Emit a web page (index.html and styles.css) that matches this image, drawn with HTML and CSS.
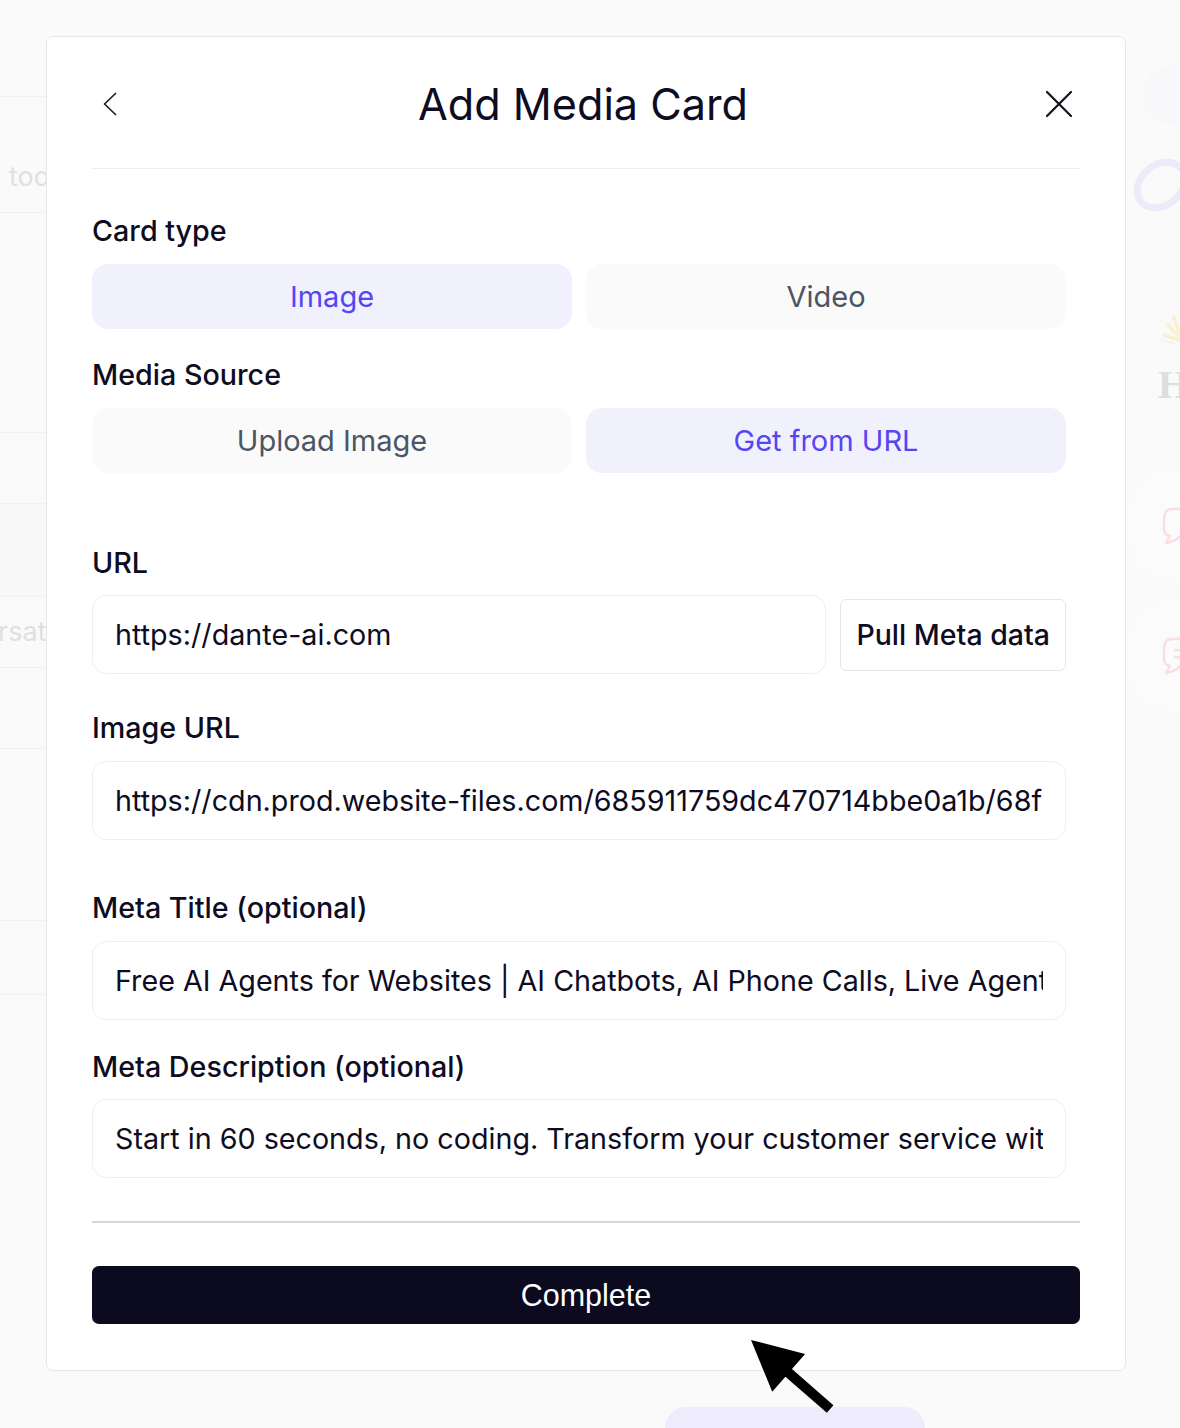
FILE: index.html
```html
<!DOCTYPE html>
<html lang="en">
<head>
<meta charset="utf-8">
<title>Add Media Card</title>
<link rel="stylesheet" href="styles.css">
</head>
<body>
<div class="app">
  <aside class="bg-left">
    <div class="bg-row r1"></div>
    <div class="bg-row r2"><span class="bg-text t-today">today</span></div>
    <div class="bg-row r3"></div>
    <div class="bg-row r4"></div>
    <div class="bg-row r5 shaded"></div>
    <div class="bg-row r6"><span class="bg-text t-conv">rsations</span></div>
    <div class="bg-row r7"></div>
    <div class="bg-row r8"></div>
    <div class="bg-row r9"></div>
  </aside>
  <main class="bg-middle">
    <div class="bg-pill"></div>
  </main>
  <aside class="bg-right">
    <div class="bg-card top"></div>
    <svg class="bg-ring" width="60" height="64" viewBox="0 0 60 64"><ellipse cx="32" cy="32" rx="26" ry="20" transform="rotate(-40 32 32)" fill="none" stroke="#ecebfa" stroke-width="7"/></svg>
    <svg class="bg-sun" width="24" height="42" viewBox="0 0 24 42"><g stroke="#fbf1d2" stroke-width="4" stroke-linecap="round"><line x1="22" y1="38" x2="8" y2="22"/><line x1="22" y1="38" x2="14" y2="14"/><line x1="22" y1="38" x2="22" y2="8"/><line x1="22" y1="38" x2="4" y2="32"/></g><path d="M2 36 Q8 40 14 40" stroke="#eeeeee" stroke-width="1.5" fill="none"/></svg>
    <div class="bg-letter">H</div>
    <div class="bg-card feat feat-one">
      <svg width="30" height="40" viewBox="0 0 30 40"><path d="M30 4 H12 Q4 4 4 14 V24 Q4 30 10 31 L6 38 Q16 36 20 31 H30" fill="none" stroke="#fbdede" stroke-width="2.5" stroke-linejoin="round"/></svg>
    </div>
    <div class="bg-card feat feat-two">
      <svg width="30" height="40" viewBox="0 0 30 40"><path d="M30 4 H12 Q4 4 4 14 V24 Q4 30 10 31 L6 38 Q16 36 20 31 H30" fill="none" stroke="#fbdede" stroke-width="2.5" stroke-linejoin="round"/><line x1="14" y1="15" x2="30" y2="15" stroke="#fbdede" stroke-width="2.5"/><line x1="14" y1="22" x2="30" y2="22" stroke="#fbdede" stroke-width="2.5"/></svg>
    </div>
  </aside>
</div>

<section class="modal">
  <header class="modal-header">
    <button class="icon-btn back" aria-label="Back">
      <svg width="14" height="24" viewBox="0 0 14 24"><polyline points="12.5,1.5 1.5,12 12.5,22.5" fill="none" stroke="#1b1b2a" stroke-width="1.7" stroke-linecap="round" stroke-linejoin="round"/></svg>
    </button>
    <h1 class="modal-title">Add Media Card</h1>
    <button class="icon-btn close" aria-label="Close">
      <svg width="28" height="28" viewBox="0 0 28 28"><g stroke="#12121f" stroke-width="2.2" stroke-linecap="round"><line x1="2" y1="2" x2="26" y2="26"/><line x1="26" y1="2" x2="2" y2="26"/></g></svg>
    </button>
  </header>

  <div class="form">
    <div class="label first">Card type</div>
    <div class="toggle-group">
      <button class="toggle active">Image</button>
      <button class="toggle">Video</button>
    </div>

    <div class="label second">Media Source</div>
    <div class="toggle-group">
      <button class="toggle">Upload Image</button>
      <button class="toggle active">Get from URL</button>
    </div>

    <div class="label field url-label">URL</div>
    <div class="url-row">
      <input class="text-input" type="text" value="https://dante-ai.com">
      <button class="pull-btn">Pull Meta data</button>
    </div>

    <div class="label field img-label">Image URL</div>
    <input class="text-input" type="text" value="https://cdn.prod.website-files.com/685911759dc470714bbe0a1b/68f9a1c2b3e4d5f6a7b8c9d0_og-image.png">

    <div class="label field title-label">Meta Title (optional)</div>
    <input class="text-input" type="text" value="Free AI Agents for Websites | AI Chatbots, AI Phone Calls, Live Agents">

    <div class="label field desc-label">Meta Description (optional)</div>
    <input class="text-input" type="text" value="Start in 60 seconds, no coding. Transform your customer service with AI agents.">
  </div>

  <hr class="footer-divider">
  <button class="complete-btn">Complete</button>
</section>

<svg class="cursor" width="95" height="85" viewBox="0 0 95 85"><polygon points="0,0 50,-25 50,-5 105,-5 105,5 50,5 50,25" transform="translate(6 5) rotate(41.1)" fill="#000"/></svg>
</body>
</html>
```

FILE: styles.css
```css
* { box-sizing: border-box; }

html, body {
  margin: 0;
  padding: 0;
}

body {
  width: 1180px;
  height: 1428px;
  overflow: hidden;
  position: relative;
  background: #fafafa;
  font-family: Inter, "Noto Sans", sans-serif;
  color: #0d0c22;
}

/* ---------- background app (dimmed) ---------- */
.app {
  display: flex;
  height: 1428px;
}

.bg-left {
  width: 46px;
  flex: none;
  overflow: hidden;
  display: flex;
  flex-direction: column;
}

.bg-row {
  border-bottom: 1px solid #f1f1f1;
  display: flex;
  align-items: center;
  white-space: nowrap;
}
.r1 { height: 97px; }
.r2 { height: 116px; align-items: flex-start; padding-top: 65px; }
.r3 { height: 220px; }
.r4 { height: 71px; }
.r5 { height: 93px; }
.r6 { height: 71px; }
.r7 { height: 81px; }
.r8 { height: 172px; }
.r9 { height: 74px; }
.shaded { background: #f8f8f8; }

.bg-text {
  font-size: 27px;
  color: #e0e0e0;
  line-height: 30px;
}
.t-today { padding-left: 9px; }
.t-conv { margin-left: -2px; }

.bg-middle {
  flex: 1;
  display: flex;
  flex-direction: column;
  justify-content: flex-end;
}

.bg-pill {
  margin-left: 619px;
  width: 260px;
  height: 21px;
  background: #eeecfc;
  border-radius: 30px 30px 0 0;
}

.bg-right {
  width: 54px;
  flex: none;
  overflow: hidden;
  display: flex;
  flex-direction: column;
  background: #fbfafb;
}

.bg-card {
  border-radius: 40px;
  background: #fdfcfc;
  flex: none;
}
.bg-card.top {
  margin-top: 65px;
  margin-left: 16px;
  width: 120px;
  height: 60px;
  background: #f8f8fa;
}
.bg-ring {
  margin-top: 28px;
  margin-left: 3px;
  flex: none;
}
.bg-sun {
  margin-top: 86px;
  margin-left: 34px;
  flex: none;
}
.bg-letter {
  margin-top: 20px;
  margin-left: 32px;
  font-family: "Liberation Serif", serif;
  font-weight: 700;
  font-size: 40px;
  line-height: 40px;
  color: #dedede;
}
.bg-card.feat {
  margin-left: 4px;
  width: 140px;
  height: 110px;
  display: flex;
  align-items: center;
  padding-left: 30px;
  background: #fcfbfb;
}
.bg-card.feat-one { margin-top: 65px; }
.bg-card.feat-two { margin-top: 20px; }

/* ---------- modal ---------- */
.modal {
  position: absolute;
  left: 46px;
  top: 36px;
  width: 1080px;
  background: #ffffff;
  border: 1px solid #e7e7e7;
  border-radius: 7px;
  padding: 40px 45px 46px;
}

.modal-header {
  display: flex;
  align-items: center;
  height: 92px;
  padding-bottom: 38px;
  border-bottom: 1px solid #eeeeee;
}

.icon-btn {
  flex: none;
  height: 54px;
  border: 0;
  padding: 0;
  background: transparent;
  display: flex;
  align-items: center;
  justify-content: center;
}
.icon-btn.back { width: 36px; }
.icon-btn.close { width: 42px; }

.modal-title {
  flex: 1;
  margin: 0;
  text-align: center;
  font-size: 43.2px;
  line-height: 54px;
  font-weight: 400;
  color: #0d0c22;
}

.form {
  padding-right: 14px;
  display: flex;
  flex-direction: column;
}

.label {
  font-size: 28.7px;
  line-height: 34px;
  font-weight: 500;
  color: #0d0c22;
  margin-bottom: 16px;
}
.label.first { margin-top: 45px; }
.label.second { margin-top: 29px; }
.label.url-label { margin-top: 73px; margin-bottom: 15px; }
.label.img-label { margin-top: 37px; }
.label.title-label { margin-top: 51px; }
.label.desc-label { margin-top: 30px; margin-bottom: 15px; }

.toggle-group {
  display: grid;
  grid-template-columns: 1fr 1fr;
  gap: 14px;
}

.toggle {
  height: 65px;
  border: 0;
  border-radius: 16px;
  background: #fafafa;
  color: #4b5563;
  font-family: inherit;
  font-size: 29px;
  font-weight: 400;
}
.toggle.active {
  background: #f1f0fd;
  color: #5546f2;
}

.url-row {
  display: flex;
  align-items: center;
  gap: 14px;
}
.url-row .text-input { flex: 1; min-width: 0; }

.text-input {
  height: 79px;
  width: 100%;
  border: 1px solid #efefef;
  border-radius: 14px;
  padding: 0 22px;
  font-family: inherit;
  font-size: 28.7px;
  color: #0d0c22;
  background: #fff;
  outline: none;
}

.pull-btn {
  flex: none;
  height: 72px;
  padding: 0 15px;
  border: 1px solid #e6e6e6;
  border-radius: 6px;
  background: #fff;
  font-family: inherit;
  font-size: 28.5px;
  font-weight: 500;
  color: #0d0c22;
}

.footer-divider {
  margin: 43px 0 0;
  border: 0;
  height: 2px;
  background: #d3d7dc;
}

.complete-btn {
  display: block;
  width: 100%;
  margin-top: 43px;
  height: 58px;
  border: 0;
  border-radius: 7px;
  background: #0b0a1e;
  color: #ffffff;
  font-family: "Liberation Sans", Arial, sans-serif;
  font-size: 30.5px;
}

.cursor {
  position: absolute;
  left: 745px;
  top: 1335px;
}
```
